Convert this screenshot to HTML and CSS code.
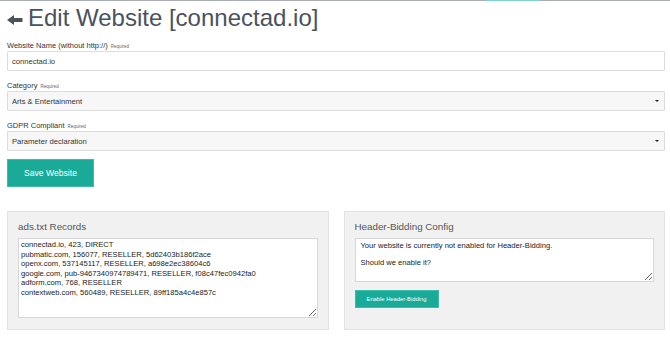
FILE: index.html
```html
<!DOCTYPE html>
<html lang="en">

<head>
    <meta charset="UTF-8">
    <meta name="viewport" content="width=device-width, initial-scale=1.0">
    <title>Edit Website</title>
    <link rel="stylesheet" href="styles.css">
</head>

<body>
    <!-- top progress line -->
    <div class="top-bar">
        <span class="bar-grey"></span>
        <span class="bar-teal"></span>
        <span class="bar-grey"></span>
    </div>

    <div class="page">
        <!-- heading -->
        <h1 class="page-title">
            <svg class="back-icon" width="16" height="10" viewBox="0 0 16 10" fill="currentColor">
                <path d="M0 5 L7 0 L7 3 L15.5 3 L15.5 7 L7 7 L7 10 Z" />
            </svg>
            <span>Edit Website [connectad.io]</span>
        </h1>

        <!-- form -->
        <form class="site-form">
            <div class="form-group">
                <label class="field-label">Website Name (without http://) <small>Required</small></label>
                <input class="field-input" type="text" value="connectad.io">
            </div>

            <div class="form-group">
                <label class="field-label">Category <small>Required</small></label>
                <div class="select-wrap">
                    <select class="field-input field-select">
                        <option>Arts &amp; Entertainment</option>
                    </select>
                    <span class="caret"></span>
                </div>
            </div>

            <div class="form-group">
                <label class="field-label">GDPR Compliant <small>Required</small></label>
                <div class="select-wrap">
                    <select class="field-input field-select">
                        <option>Parameter declaration</option>
                    </select>
                    <span class="caret"></span>
                </div>
            </div>

            <button type="button" class="btn btn-save">Save Website</button>
        </form>

        <!-- panels -->
        <div class="panels">
            <div class="panel">
                <div class="panel-title">ads.txt Records</div>
                <textarea class="panel-text records">connectad.io, 423, DIRECT
pubmatic.com, 156077, RESELLER, 5d62403b186f2ace
openx.com, 537145117, RESELLER, a698e2ec38604c6
google.com, pub-9467340974789471, RESELLER, f08c47fec0942fa0
adform.com, 768, RESELLER
contextweb.com, 560489, RESELLER, 89ff185a4c4e857c</textarea>
            </div>

            <div class="panel">
                <div class="panel-title">Header-Bidding Config</div>
                <textarea class="panel-text hb-info" readonly>Your website is currently not enabled for Header-Bidding.

Should we enable it?</textarea>
                <button type="button" class="btn btn-small">Enable Header-Bidding</button>
            </div>
        </div>
    </div>
</body>

</html>
```

FILE: styles.css
```css
/* base */
body {
    margin: 0;
    background: #fff;
    color: #333;
    font-family: "Liberation Sans", Arial, Helvetica, sans-serif;
}

/* top line */
.top-bar {
    display: grid;
    grid-template-columns: 486px 54px 1fr;
    height: 1px;
}

.bar-grey {
    background: #a8aeb4;
}

.bar-teal {
    background: #7fd5cb;
}

.page {
    padding: 0 5px 0 7px;
}

/* heading */
.page-title {
    display: flex;
    align-items: center;
    margin: 3px 0 9px;
    font-size: 24px;
    font-weight: normal;
    line-height: 28px;
    color: #4a5260;
}

.back-icon {
    margin-right: 5px;
    margin-top: 3px;
}

/* form */
.form-group {
    margin-bottom: 10px;
}

.field-label {
    display: block;
    height: 10px;
    font-size: 7.5px;
    line-height: 10px;
    color: #333;
}

.field-label small {
    font-size: 4.5px;
    color: #666;
    margin-left: 1px;
}

.field-input {
    display: block;
    width: 100%;
    height: 20px;
    box-sizing: border-box;
    margin: 0;
    padding: 0 4px;
    border: 1px solid #dcdcdc;
    border-radius: 1px;
    background: #fff;
    font-family: inherit;
    font-size: 7.6px;
    color: #333;
    outline: none;
}

.select-wrap {
    position: relative;
}

.field-select {
    appearance: none;
    -webkit-appearance: none;
    background: #f7f7f7;
}

.caret {
    position: absolute;
    right: 6px;
    top: 9px;
    width: 0;
    height: 0;
    border-left: 2px solid transparent;
    border-right: 2px solid transparent;
    border-top: 2px solid #222;
}

/* buttons */
.btn {
    display: block;
    border: 1px solid #3dbcab;
    background: #19aa98;
    color: #fff;
    font-family: inherit;
    cursor: pointer;
    padding: 0;
}

.btn-save {
    width: 87px;
    height: 28px;
    margin-top: -2px;
    font-size: 8.6px;
}

.btn-small {
    width: 84px;
    height: 18px;
    margin-top: 8px;
    font-size: 5.8px;
}

/* panels */
.panels {
    display: grid;
    grid-template-columns: 1fr 1fr;
    gap: 15px;
    margin-top: 24px;
}

.panel {
    background: #f1f1f1;
    border: 1px solid #e2e2e2;
    padding: 9px 10px 11px;
}

.panel-title {
    font-size: 9.8px;
    line-height: 12px;
    color: #555;
    margin-bottom: 5px;
}

.panel-text {
    display: block;
    width: 100%;
    box-sizing: border-box;
    margin: 0;
    border: 1px solid #d8d8d8;
    background: #fff;
    font-family: inherit;
    color: #222;
    font-size: 7.6px;
    outline: none;
}

.records {
    height: 80px;
    padding: 1px 2px;
    line-height: 9.5px;
}

.hb-info {
    height: 44px;
    padding: 3px 5px;
    line-height: 8.3px;
}
```
